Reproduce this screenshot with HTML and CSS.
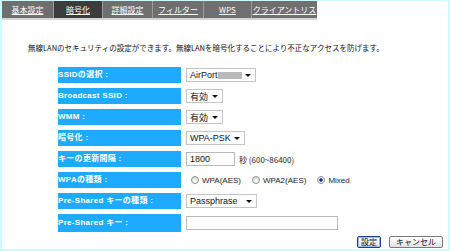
FILE: index.html
```html
<!DOCTYPE html>
<html lang="ja">

<head>
    <meta charset="UTF-8">
    <title>暗号化</title>
    <link rel="stylesheet" href="styles.css">
</head>

<body>
    <div class="frame">
        <nav class="tabs">
            <a class="tab t1">基本設定</a>
            <a class="tab t2 active">暗号化</a>
            <a class="tab t3">詳細設定</a>
            <a class="tab t4">フィルター</a>
            <a class="tab t5">WPS</a>
            <a class="tab t6">クライアントリスト</a>
        </nav>

        <p class="intro">無線LANのセキュリティの設定ができます。無線LANを暗号化することにより不正なアクセスを防げます。</p>

        <form class="settings">
            <div class="row">
                <div class="label">SSIDの選択 :</div>
                <div class="select w-ssid"><span>AirPort</span><span class="masked"></span></div>
            </div>
            <div class="row">
                <div class="label">Broadcast SSID :</div>
                <div class="select w-short"><span>有効</span></div>
            </div>
            <div class="row">
                <div class="label">WMM :</div>
                <div class="select w-short"><span>有効</span></div>
            </div>
            <div class="row">
                <div class="label">暗号化 :</div>
                <div class="select w-enc"><span>WPA-PSK</span></div>
            </div>
            <div class="row">
                <div class="label">キーの更新間隔 :</div>
                <div class="field">
                    <input type="text" class="text w-interval" value="1800">
                    <span class="note">秒 (600~86400)</span>
                </div>
            </div>
            <div class="row">
                <div class="label">WPAの種類 :</div>
                <div class="field radios">
                    <label><input type="radio" name="wpa"> WPA(AES)</label>
                    <label><input type="radio" name="wpa"> WPA2(AES)</label>
                    <label><input type="radio" name="wpa" checked> Mixed</label>
                </div>
            </div>
            <div class="row">
                <div class="label">Pre-Shared キーの種類 :</div>
                <div class="select w-pass"><span>Passphrase</span></div>
            </div>
            <div class="row tall">
                <div class="label">Pre-Shared キー :</div>
                <input type="text" class="text w-key">
            </div>

            <div class="actions">
                <button type="button" class="btn primary">設定</button>
                <button type="button" class="btn">キャンセル</button>
            </div>
        </form>
    </div>
</body>

</html>
```

FILE: styles.css
```css
* {
    box-sizing: border-box;
}

body {
    margin: 0;
    background-color: #ffffff;
    font-family: "Noto Sans CJK JP", "Liberation Sans", sans-serif;
}

.frame {
    width: 450px;
    height: 251px;
    border: 2px solid #ccfbff;
    border-top-width: 1px;
}

/* tabs */

.tabs {
    display: flex;
    width: fit-content;
    height: 19px;
    background-color: #6f6f6f;
    border-bottom: 2px solid #d4d4d4;
}

.tab {
    display: block;
    height: 17px;
    line-height: 17px;
    text-align: center;
    font-size: 8px;
    color: #ffffff;
    text-decoration: underline;
    border-right: 1px solid #9c9c9c;
}

.tab.active {
    background-color: #3c3c3c;
}

.t1 { width: 52px; }
.t2 { width: 49px; }
.t3 { width: 50px; }
.t4 { width: 51px; }
.t5 { width: 48px; }
.t6 { width: 65px; border-right: none; }

.intro {
    margin: 23px 0 0 26px;
    font-size: 7.5px;
    line-height: 10px;
    color: #111111;
}

/* form rows */

.settings {
    margin-top: 14px;
    padding-left: 56px;
}

.row {
    display: grid;
    grid-template-columns: 123px auto;
    column-gap: 5px;
    align-items: center;
    height: 16px;
    margin-bottom: 5px;
}

.row.tall {
    height: 18px;
}

.label {
    height: 100%;
    background-color: #1eaaff;
    color: #ffffff;
    font-family: "Liberation Sans", "Noto Sans CJK JP", sans-serif;
    font-weight: bold;
    font-size: 8px;
    line-height: 16px;
    letter-spacing: 0.3px;
}

.tall .label {
    line-height: 18px;
}

.select {
    position: relative;
    display: flex;
    align-items: center;
    height: 14px;
    padding-left: 3px;
    background-color: #ffffff;
    border: 1px solid #c4c4c4;
    font-family: "Liberation Sans", "Noto Sans CJK JP", sans-serif;
    font-size: 9px;
    color: #111111;
}

.select::after {
    content: "";
    position: absolute;
    right: 4px;
    top: 5px;
    border-left: 3px solid transparent;
    border-right: 3px solid transparent;
    border-top: 3px solid #111111;
}

.masked {
    width: 24px;
    height: 7px;
    background-color: #b9b9b9;
}

.w-ssid { width: 70px; }
.w-short { width: 37px; }
.w-enc { width: 59px; }
.w-pass { width: 71px; }

.field {
    display: flex;
    align-items: center;
    font-size: 8px;
    color: #222222;
}

input.text {
    height: 14px;
    padding: 0 3px;
    border: 1px solid #b8b8b8;
    font-family: "Liberation Sans", sans-serif;
    font-size: 9px;
    color: #111111;
    outline: none;
}

.w-interval { width: 49px; }
.w-key { width: 152px; height: 16px; }

.note {
    margin-left: 4px;
}

.radios {
    font-family: "Liberation Sans", sans-serif;
    font-size: 8px;
    gap: 11px;
    padding-left: 5px;
}

.radios label {
    display: flex;
    align-items: center;
}

input[type="radio"] {
    appearance: none;
    width: 8px;
    height: 8px;
    margin: 0 3px 0 0;
    border: 1px solid #8c8c8c;
    border-radius: 50%;
    background: linear-gradient(#dcdcdc, #ffffff);
}

input[type="radio"]:checked {
    background: radial-gradient(circle, #1b3f8a 1.5px, #ffffff 2px);
}

/* buttons */

.actions {
    display: flex;
    justify-content: flex-end;
    gap: 8px;
    margin-top: -1px;
    padding-right: 5px;
}

.btn {
    height: 12px;
    padding: 0 6px;
    font-family: "Noto Sans CJK JP", sans-serif;
    font-size: 8px;
    line-height: 10px;
    color: #111111;
    background: linear-gradient(#ffffff, #e3e3e3);
    border: 1px solid #7a7a7a;
    border-radius: 2px;
}

.btn.primary {
    padding: 0 3px;
    border-color: #1d3d8f;
    box-shadow: inset 0 0 0 1px #9cc0ee;
}
```
